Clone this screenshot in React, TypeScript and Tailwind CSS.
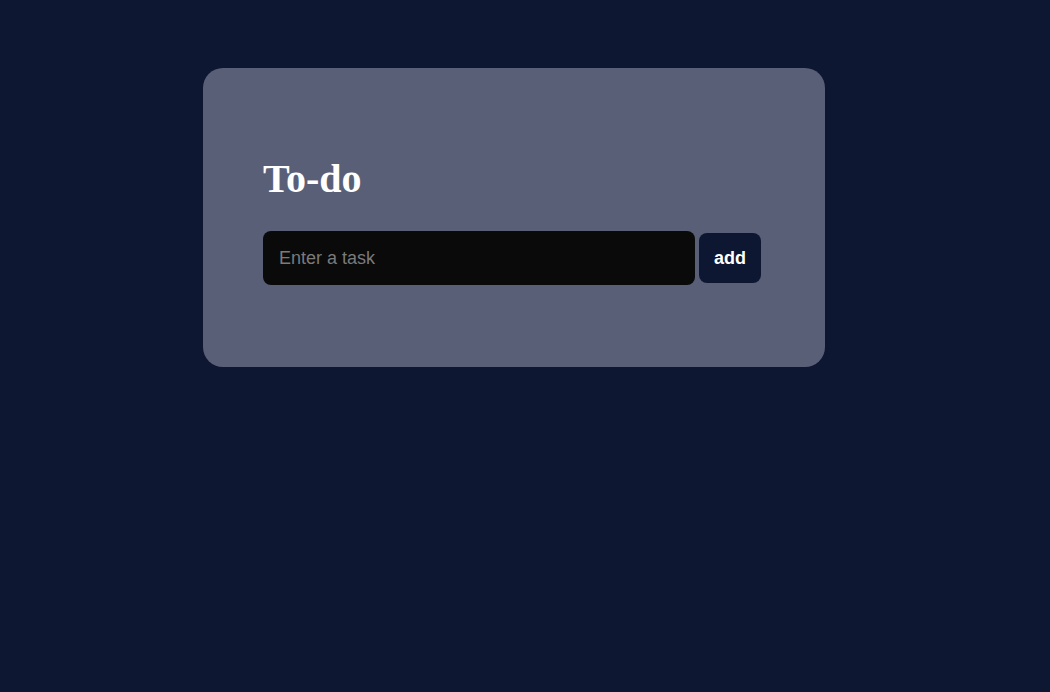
export default function App() {
    return (
        <div className="min-h-[692px] w-full bg-[#0e1731] pt-[68px]">
            <div className="ml-[203px] w-[622px] rounded-[20px] bg-[#5a5f78] pl-[60px] pt-[88px] pb-[82px]">
                <h1 className="text-[40px] leading-[46px] font-bold text-white [font-family:'Liberation_Serif',serif]">To-do</h1>
                <div className="mt-[29px] flex items-center gap-[4px]">
                    <input
                        type="text"
                        placeholder="Enter a task"
                        className="h-[54px] w-[432px] rounded-[8px] bg-[#0a0a0a] px-[16px] text-[18px] text-white outline-none placeholder:text-[#7a7a7a] [font-family:'Liberation_Sans',sans-serif]"
                    />
                    <button className="h-[50px] w-[62px] rounded-[8px] bg-[#0e1731] text-[18px] font-bold text-white [font-family:'Liberation_Sans',sans-serif]">
                        add
                    </button>
                </div>
            </div>
        </div>
    )
}
